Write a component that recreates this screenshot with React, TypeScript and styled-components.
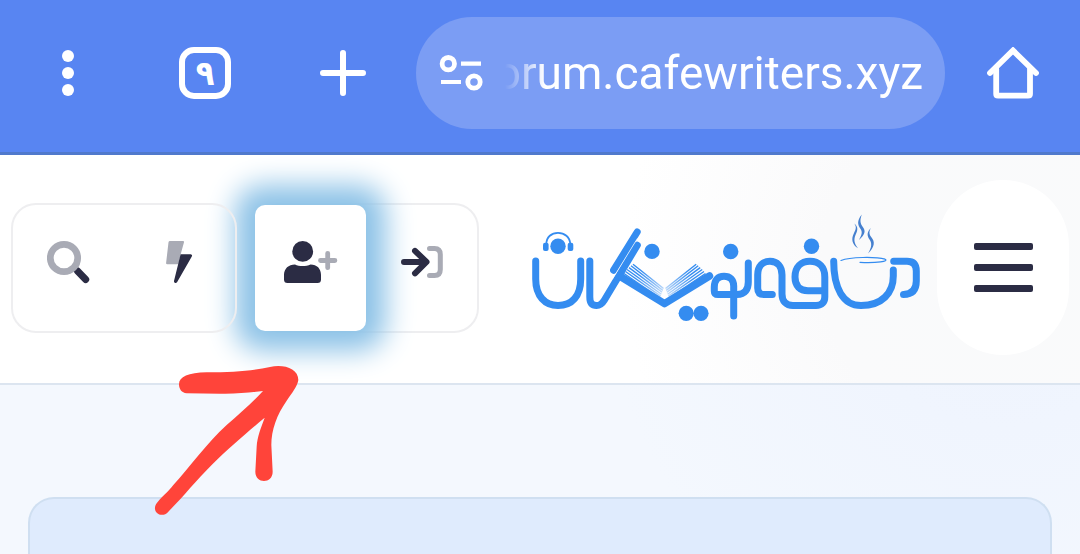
import React from "react";
import styled, { createGlobalStyle, css } from "styled-components";

const ink = "#2b2c44";
const muted = "#a9abb5";
const brand = "#348cf0";

const GlobalStyle = createGlobalStyle`
  * { box-sizing: border-box; }
  html, body { margin: 0; padding: 0; }
  body { font-family: Roboto, "Noto Sans", sans-serif; background: #f4f8fe; }
  button { border: 0; padding: 0; background: none; font: inherit; color: inherit; cursor: pointer; }
  svg { display: block; }
`;

const Page = styled.div`
  position: relative;
  min-height: 100vh;
  overflow: hidden;
  display: flex;
  flex-direction: column;
`;

const BrowserBar = styled.header`
  display: flex;
  align-items: center;
  padding: 17px 41px 23px;
  background: #5885f2;
  border-bottom: 3px solid #5079cc;
  color: #fff;
`;

const BarActions = styled.div`
  display: flex;
  gap: 86px;
`;

const BarButton = styled.button`
  width: 52px;
  height: 52px;
  flex: none;
`;

const TabsButton = styled(BarButton)`
  display: flex;
  align-items: center;
  justify-content: center;
  border: 6px solid #fff;
  border-radius: 15px;
  font: bold 34px/40px "DejaVu Sans Condensed", "DejaVu Sans", sans-serif;
`;

const AddressBar = styled.div`
  flex: 1;
  min-width: 0;
  height: 112px;
  margin: 0 42px 0 47px;
  padding: 0 22px 0 23px;
  display: flex;
  align-items: center;
  gap: 22px;
  border-radius: 56px;
  background: #7b9df4;
`;

const SiteInfo = styled.button`
  flex: none;
`;

const AddressInput = styled.input`
  flex: 1;
  min-width: 0;
  height: 64px;
  padding: 0;
  border: 0;
  outline: 0;
  background: none;
  color: #fff;
  font: 46px/64px Roboto, sans-serif;
  direction: rtl;
  mask-image: linear-gradient(to right, transparent, #000 40px);
`;

const SiteHeader = styled.header`
  display: flex;
  align-items: center;
  gap: 18px;
  padding: 25px 11px 28px;
  border-bottom: 2px solid #dce5f0;
  background: radial-gradient(circle at calc(100% - 77px) 112px, #f9fafb 0, #fafafb 180px, #fff 380px);
`;

const ActionGroup = styled.div<{ $raised?: boolean }>`
  display: flex;
  height: 130px;
  border: 2px solid #eeeef0;
  border-radius: 25px;
  ${(p) => p.$raised && css`position: relative; z-index: 1;`}
`;

const ActionButton = styled.button<{ $highlighted?: boolean }>`
  display: flex;
  align-items: center;
  justify-content: center;
  width: 111px;
  padding-bottom: 12px;
  ${(p) =>
    p.$highlighted &&
    css`
      background: #fff;
      border-radius: 10px;
      margin-left: -2px;
      box-shadow: 0 0 28px 20px #8cc2e7;
    `}
`;

const LogoLink = styled.a`
  margin-left: auto;
`;

const MenuButton = styled.button`
  width: 132px;
  height: 175px;
  margin-left: -5px;
  flex: none;
  display: flex;
  flex-direction: column;
  align-items: center;
  justify-content: center;
  gap: 14px;
  border-radius: 66px;
  background: #fff;
`;

const MenuLine = styled.span`
  width: 59px;
  height: 7px;
  border-radius: 2px;
  background: ${ink};
`;

const Main = styled.main`
  flex: 1;
  display: flex;
  flex-direction: column;
  padding: 112px 28px 0;
  background: radial-gradient(circle at calc(100% - 77px) -116px, #eef3fd 0, #f0f5fe 160px, #f4f8fe 400px);
`;

const Panel = styled.section`
  flex: 1;
  min-height: 57px;
  border: 2px solid #cfdff1;
  border-bottom: 0;
  border-radius: 26px 26px 0 0;
  background: #dfebfd;
`;

const Pointer = styled.svg`
  position: absolute;
  left: 140px;
  top: 350px;
  z-index: 2;
  pointer-events: none;
`;

const leftPages = [[624, 273.5], [625.5, 271.5], [627, 269.5], [629, 267.6], [631, 265.8], [633, 264.2]];
const rightPages = [[705.5, 273.5], [704, 271.5], [702.2, 269.5], [700.2, 267.6], [698.2, 265.8], [696.2, 264.2]];

const Logo = () => (
  <svg width="396" height="116" viewBox="528 210 396 116" fill="none" stroke={brand} strokeWidth="7" strokeLinecap="round" strokeLinejoin="round" aria-hidden="true">
    <defs>
      <linearGradient id="pageLeft" gradientUnits="userSpaceOnUse" x1="625" y1="268" x2="664" y2="299">
        <stop offset="0.3" stopColor={brand} />
        <stop offset="1" stopColor={brand} stopOpacity="0.2" />
      </linearGradient>
      <linearGradient id="pageRight" gradientUnits="userSpaceOnUse" x1="704" y1="268" x2="665" y2="299">
        <stop offset="0.3" stopColor={brand} />
        <stop offset="1" stopColor={brand} stopOpacity="0.2" />
      </linearGradient>
    </defs>
    <path d="M535.7 261V279C535.7 296 545 305.5 558 305.5C572 305.5 580.7 296 580.7 279V261" />
    <path d="M589.8 261V297C589.8 303 592 305.5 596.5 305.5C600.5 305.5 602.3 303.5 604.3 300.2L637.3 245.2" />
    <path d="M613.6 270.2L637.2 232" />
    <path d="M612.5 279L637.3 238.6" stroke="#fff" strokeWidth="0.6" />
    <g strokeWidth="1.4" strokeLinecap="butt" stroke="url(#pageLeft)">
      {leftPages.map(([x, y], i) => (
        <path key={x} d={`M${x} ${y}L${660 + i * 0.7} ${298 - i * 1.9}`} />
      ))}
    </g>
    <g strokeWidth="1.4" strokeLinecap="butt" stroke="url(#pageRight)">
      {rightPages.map(([x, y], i) => (
        <path key={x} d={`M${x} ${y}L${669 - i * 0.7} ${298 - i * 1.9}`} />
      ))}
    </g>
    <path d="M622 277.5L664.5 303.7L709.5 276" strokeWidth="7.4" />
    <path d="M546.3 244C546.5 237 551.5 232.8 558 232.8S569.8 237 570.3 244" strokeWidth="1.8" />
    <path d="M733.7 316V286C733.7 279.5 730 276.3 724 276.3C717.5 276.3 714.3 280.5 714.3 287V291Q714.3 294.6 718 294.6H737C745 294.6 748.3 289.5 748.3 282V263" />
    <path d="M772.3 294.6H764Q757.7 294.6 757.7 288V275C757.7 266 763 261.3 770 261.3C777 261.3 782 266 782 275V294C782 301 786 305.5 793 305.5H816C822 305.5 824.8 302 824.8 297V277C824.8 267 819 261.3 810 261.3C801 261.3 795 267 795 277C795 286 800 290.7 808 290.7H823" />
    <path d="M833.7 261.3C833.7 288 843 305.5 861 305.5C882 305.5 893.3 293 893.3 276V270" />
    <path d="M893.7 261.3H907Q916.3 261.3 916.3 271V281Q916.3 294.4 903.5 294.4" />
    <path d="M841 260.5C850 256.8 876 256.6 885 259.2C889.5 261.3 877 263.2 860 262.4" strokeWidth="1.2" />
    <g fill={brand} stroke="none">
      <circle cx="558" cy="246.3" r="7.7" />
      <rect x="543" y="242.7" width="5.6" height="8.4" rx="2" />
      <rect x="567.7" y="242.7" width="5.6" height="8.4" rx="2" />
      <circle cx="652" cy="251.4" r="7.7" />
      <circle cx="686.2" cy="313.3" r="7.6" />
      <circle cx="701" cy="313.3" r="7.6" />
      <circle cx="730.7" cy="251.5" r="7.7" />
      <circle cx="811.5" cy="246.3" r="7.7" />
    </g>
    <g fill="#4680cf" stroke="none">
      <path d="M861.8 214.5C856.5 221 857.8 225 860.6 229C862.8 232.5 861.5 235 859 240C865 234.5 866 231 862.8 227C860 223 859.8 220 861.8 214.5Z" />
      <path d="M854.2 223.5C858.8 227 857.5 231 855.5 235C853.5 240 854.3 243.5 858 248.3C851.5 244 851.3 238.5 853.8 233.5C855.8 229.5 857 227 854.2 223.5Z" />
      <path d="M870.8 228C868.8 232 869.2 234 871.2 237C875.5 242 874.5 247 868 253.5C872 247 872 243 869.5 239.5C866.5 235 867.2 232 870.8 228Z" />
    </g>
  </svg>
);

export default function App() {
  return (
    <>
      <GlobalStyle />
      <Page>
        <BrowserBar>
          <BarActions>
            <BarButton aria-label="More options">
              <svg width="52" height="52" viewBox="0 0 52 52" fill="#fff">
                <circle cx="27" cy="9" r="6" />
                <circle cx="27" cy="26" r="6" />
                <circle cx="27" cy="43" r="6" />
              </svg>
            </BarButton>
            <TabsButton>۹</TabsButton>
            <BarButton aria-label="New tab">
              <svg width="52" height="52" viewBox="0 0 52 52" stroke="#fff" strokeWidth="6" strokeLinecap="round">
                <path d="M26 6V46M6 26H46" />
              </svg>
            </BarButton>
          </BarActions>
          <AddressBar>
            <SiteInfo aria-label="Site information">
              <svg width="44" height="40" viewBox="439 53 44 40" fill="none" stroke="#fff" strokeWidth="4.8">
                <circle cx="448.3" cy="63.7" r="6.2" />
                <path d="M461 63.7H481M441 82H461" strokeWidth="4.2" />
                <circle cx="474" cy="82" r="6.2" />
              </svg>
            </SiteInfo>
            <AddressInput aria-label="Address" defaultValue="forum.cafewriters.xyz" />
          </AddressBar>
          <BarButton aria-label="Home">
            <svg width="52" height="52" viewBox="987 47 52 52" fill="none" stroke="#fff" strokeWidth="5.8" strokeLinecap="round">
              <path d="M990 73L1013 50.5L1036 73" />
              <path d="M996.2 69V94Q996.2 95.6 998 95.6H1028Q1030 95.6 1030 94V69" />
            </svg>
          </BarButton>
        </BrowserBar>

        <SiteHeader>
          <ActionGroup $raised>
            <ActionButton aria-label="Search">
              <svg width="44" height="44" viewBox="47 239 44 44" fill="none">
                <path d="M77.5 270L85.7 278.5" stroke={ink} strokeWidth="7" strokeLinecap="round" />
                <circle cx="64" cy="257" r="13.7" stroke={muted} strokeWidth="6.7" />
              </svg>
            </ActionButton>
            <ActionButton aria-label="What's new">
              <svg width="44" height="44" viewBox="158 239 44 44">
                <path d="M170 240H183Q184.3 240 184 241.3L180.6 253.5L178.5 263.2H167.3Q166 263.2 166.1 262L168.5 241.3Q168.7 240 170 240Z" fill={muted} />
                <path d="M180.6 253.3H190.6Q192.8 253.6 191.8 255.5L177.2 281Q176.3 282.3 175 281.9Q173.6 281.3 174 280Z" fill={ink} />
              </svg>
            </ActionButton>
          </ActionGroup>
          <ActionGroup>
            <ActionButton $highlighted aria-label="Register">
              <svg width="56" height="44" viewBox="283 239 56 44">
                <circle cx="302.7" cy="250.4" r="10.4" fill={ink} />
                <path d="M295 263.4C299 265.6 306 265.6 310.5 263.4C317 263.4 321 267.5 321 274V278.5Q321 282 317.5 282H287.5Q284 282 284 278.5V274C284 267.5 288.5 263.4 295 263.4Z" fill={ink} />
                <path d="M327.7 252.3V266.7M320.5 259.5H334.9" stroke={muted} strokeWidth="4.8" strokeLinecap="round" />
              </svg>
            </ActionButton>
            <ActionButton aria-label="Log in">
              <svg width="44" height="44" viewBox="399 239 44 44" fill="none" strokeLinecap="round" strokeLinejoin="round">
                <path d="M428.5 247.5H433.5Q439.3 247.5 439.3 253.5V268.5Q439.3 274.5 433.5 274.5H428.5" stroke={muted} strokeWidth="5" />
                <path d="M403 260.9H425M414 249.9L425.5 260.9L414 272.3" stroke={ink} strokeWidth="6" />
              </svg>
            </ActionButton>
          </ActionGroup>
          <LogoLink href="#home" aria-label="Café writers home">
            <Logo />
          </LogoLink>
          <MenuButton aria-label="Menu">
            <MenuLine />
            <MenuLine />
            <MenuLine />
          </MenuButton>
        </SiteHeader>

        <Main>
          <Panel />
        </Main>

        <Pointer width="180" height="180" viewBox="0 0 540 540" fill="#ff443a" aria-hidden="true">
          <path d="M117 103C117 80 145 68 200 67C280 67 340 62 390 51C430 42 475 55 475 90C472 110 455 130 440 152C410 195 394 240 394 285L398 365C398 402 346 402 346 365L350 290C352 260 362 235 374 203C330 240 270 290 215 345C165 395 130 440 85 485C65 508 32 485 50 460C60 445 85 425 100 405C150 350 200 280 260 225C300 190 335 160 369 123C330 128 290 132 240 131L140 130C125 129 117 117 117 103Z" />
        </Pointer>
      </Page>
    </>
  );
}
